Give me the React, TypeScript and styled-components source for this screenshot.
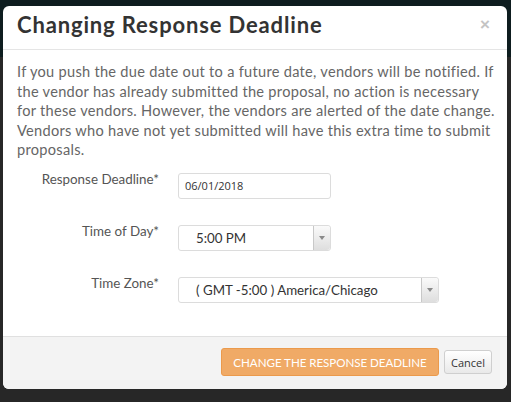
import React from "react";
import styled, { createGlobalStyle } from "styled-components";

const Global = createGlobalStyle`
  html, body { margin: 0; padding: 0; }
  body { font-family: Lato, "Open Sans", "Liberation Sans", sans-serif; }
  * { box-sizing: border-box; }
`;

const Backdrop = styled.div`
  width: 511px;
  height: 402px;
  overflow: hidden;
  background: linear-gradient(#0e1d1f 0, #0e1d1f 57px, #272727 57px, #272727 100%);
  padding: 6px 4px 0 3px;
`;

const Modal = styled.div`
  width: 504px;
  height: 383px;
  background: #fff;
  border-radius: 6px;
  overflow: hidden;
  display: flex;
  flex-direction: column;
`;

const Header = styled.div`
  height: 44px;
  flex: none;
  display: flex;
  align-items: center;
  justify-content: space-between;
  padding: 0 17px 6px 14px;
  border-bottom: 1px solid #e5e5e5;
`;

const Title = styled.h3`
  margin: 0;
  font-size: 22px;
  font-weight: 700;
  color: #333;
  letter-spacing: 0.85px;
`;

const Close = styled.span`
  font-family: "Liberation Sans", Arial, sans-serif;
  font-size: 17px;
  font-weight: 700;
  color: #c4c4c4;
  line-height: 1;
`;

const Body = styled.div`
  flex: 1;
  padding: 12px 8px 0 14px;
`;

const Intro = styled.p`
  margin: 0;
  font-size: 14.6px;
  letter-spacing: 0.28px;
  line-height: 19.5px;
  color: #666;
`;

const Form = styled.div`
  margin-top: 13px;
  display: grid;
  grid-template-columns: 142px 1fr;
  column-gap: 19px;
  row-gap: 26px;
  align-items: start;
`;

const Label = styled.label`
  text-align: right;
  font-size: 13.4px;
  color: #555;
  line-height: 16px;
  margin-top: -2px;
`;

const Field = styled.div<{ $w: number }>`
  width: ${(p) => p.$w}px;
  height: 26px;
  border: 1px solid #dcdcdc;
  border-radius: 3px;
  background: #fff;
  display: flex;
  align-items: center;
`;

const DateText = styled.span`
  padding-left: 6px;
  font-size: 11px;
  color: #333;
  font-family: "Open Sans", Lato, sans-serif;
`;

const SelectText = styled.span`
  flex: 1;
  padding-left: 17px;
  font-size: 13.3px;
  color: #333;
`;

const Arrow = styled.span`
  width: 17px;
  height: 100%;
  border-left: 1px solid #c8c8c8;
  border-radius: 0 3px 3px 0;
  background: linear-gradient(#fafafa, #dedede);
  display: flex;
  align-items: center;
  justify-content: center;
  &::after {
    content: "";
    border-left: 3px solid transparent;
    border-right: 3px solid transparent;
    border-top: 4px solid #8a8a8a;
  }
`;

const Footer = styled.div`
  height: 53px;
  flex: none;
  border-top: 1px solid #e0e0e0;
  background: #f3f3f3;
  display: flex;
  align-items: center;
  justify-content: flex-end;
  gap: 5px;
  padding: 0 15px 2px 0;
`;

const Primary = styled.button`
  height: 28px;
  width: 218px;
  background: #f0aa66;
  border: 1px solid #eb9a4c;
  border-radius: 3px;
  color: #fff;
  font-family: Lato, sans-serif;
  font-size: 11.6px;
  letter-spacing: -0.05px;
  white-space: nowrap;
  padding: 0;
`;

const Cancel = styled.button`
  height: 24px;
  width: 48px;
  background: linear-gradient(#fff, #e9e9e9);
  border: 1px solid #cfcfcf;
  border-radius: 3px;
  color: #333;
  font-family: "Open Sans", Lato, sans-serif;
  font-size: 11px;
  padding: 0;
`;

export default function App() {
  return (
    <>
      <Global />
      <Backdrop>
        <Modal>
          <Header>
            <Title>Changing Response Deadline</Title>
            <Close>×</Close>
          </Header>
          <Body>
            <Intro>
              If you push the due date out to a future date, vendors will be notified. If the vendor has
              already submitted the proposal, no action is necessary for these vendors. However, the
              vendors are alerted of the date change. Vendors who have not yet submitted will have this
              extra time to submit proposals.
            </Intro>
            <Form>
              <Label>Response Deadline*</Label>
              <Field $w={153}>
                <DateText>06/01/2018</DateText>
              </Field>
              <Label>Time of Day*</Label>
              <Field $w={153}>
                <SelectText>5:00 PM</SelectText>
                <Arrow />
              </Field>
              <Label>Time Zone*</Label>
              <Field $w={261}>
                <SelectText>( GMT -5:00 ) America/Chicago</SelectText>
                <Arrow />
              </Field>
            </Form>
          </Body>
          <Footer>
            <Primary>CHANGE THE RESPONSE DEADLINE</Primary>
            <Cancel>Cancel</Cancel>
          </Footer>
        </Modal>
      </Backdrop>
    </>
  );
}
